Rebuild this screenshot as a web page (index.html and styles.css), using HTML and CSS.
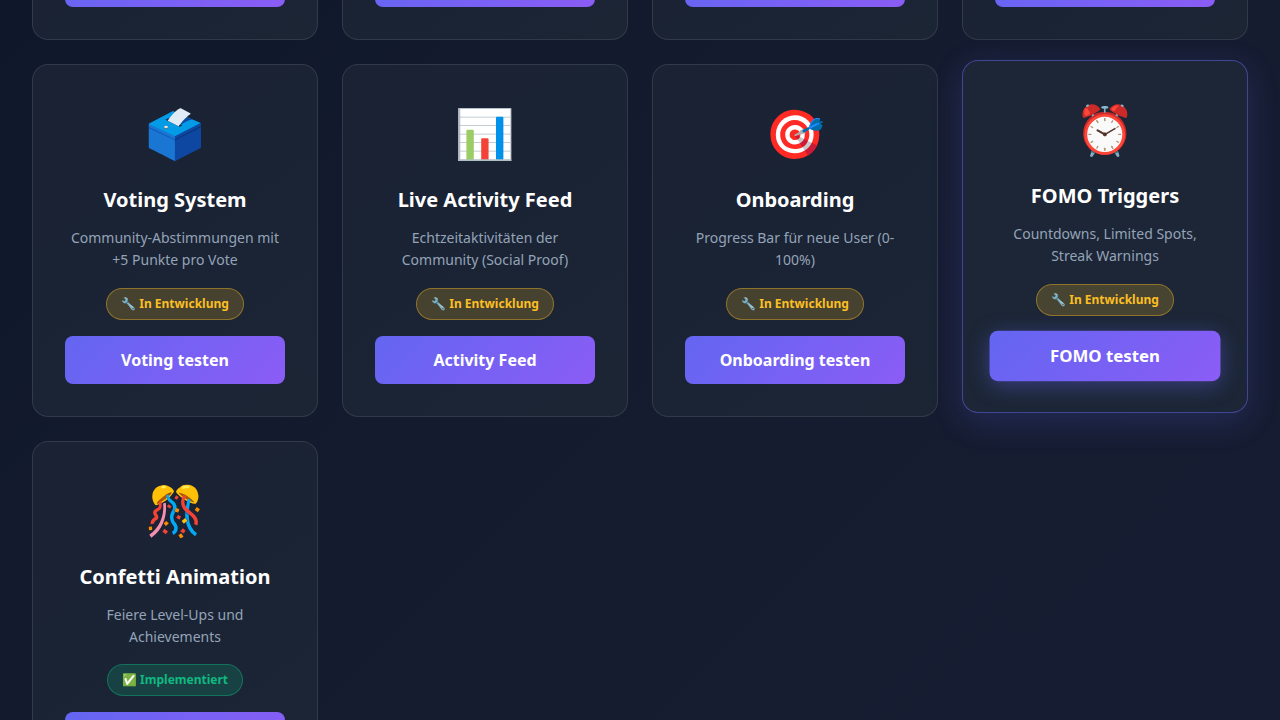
FILE: index.html
```html
<!DOCTYPE html>
<html lang="de">
<head>
    <meta charset="UTF-8">
    <meta name="viewport" content="width=device-width, initial-scale=1.0">
    <title>Features</title>
    <link rel="stylesheet" href="styles.css">
</head>
<body>
    <div class="feature-grid">
        <!-- previous row, only its bottom edge is in view -->
        <div class="card card-tail"><button class="test-btn">&nbsp;</button></div>
        <div class="card card-tail"><button class="test-btn">&nbsp;</button></div>
        <div class="card card-tail"><button class="test-btn">&nbsp;</button></div>
        <div class="card card-tail"><button class="test-btn">&nbsp;</button></div>

        <div class="card">
            <div class="card-icon">🗳️</div>
            <h3>Voting System</h3>
            <p>Community-Abstimmungen mit +5 Punkte pro Vote</p>
            <span class="badge badge-dev">🔧 In Entwicklung</span>
            <button class="test-btn">Voting testen</button>
        </div>
        <div class="card">
            <div class="card-icon">📊</div>
            <h3>Live Activity Feed</h3>
            <p>Echtzeitaktivitäten der Community (Social Proof)</p>
            <span class="badge badge-dev">🔧 In Entwicklung</span>
            <button class="test-btn">Activity Feed</button>
        </div>
        <div class="card">
            <div class="card-icon">🎯</div>
            <h3>Onboarding</h3>
            <p>Progress Bar für neue User (0-100%)</p>
            <span class="badge badge-dev">🔧 In Entwicklung</span>
            <button class="test-btn">Onboarding testen</button>
        </div>
        <div class="card card-active">
            <div class="card-icon">⏰</div>
            <h3>FOMO Triggers</h3>
            <p>Countdowns, Limited Spots, Streak Warnings</p>
            <span class="badge badge-dev">🔧 In Entwicklung</span>
            <button class="test-btn">FOMO testen</button>
        </div>
        <div class="card">
            <div class="card-icon">🎊</div>
            <h3>Confetti Animation</h3>
            <p>Feiere Level-Ups und Achievements</p>
            <span class="badge badge-done">✅ Implementiert</span>
            <button class="test-btn">Confetti testen</button>
        </div>
    </div>
</body>
</html>
```

FILE: styles.css
```css
* {
    box-sizing: border-box;
}
html, body {
    height: 720px;
    overflow: hidden;
}
body {
    margin: 0;
    font-family: "Noto Sans", sans-serif;
    background: linear-gradient(135deg, #0f172a 0%, #151c30 55%, #161d32 100%);
    color: #FFFFFF;
}
.feature-grid {
    display: grid;
    grid-template-columns: repeat(4, 1fr);
    gap: 24px;
    margin-top: -73.95px;
    padding: 0 32px;
}
.card {
    display: flex;
    flex-direction: column;
    align-items: center;
    padding: 32px;
    text-align: center;
    background: linear-gradient(145deg, #1a2234, #1b2534);
    border: 1px solid rgba(255, 255, 255, 0.1);
    border-radius: 16px;
}
.card-tail {
    justify-content: flex-end;
}
.card-active {
    transform: translateY(-4px);
    background: #1c2636;
    border-color: rgba(99, 102, 241, 0.5);
    box-shadow: 0 8px 32px rgba(99, 102, 241, 0.2);
}
.card-active .test-btn {
    transform: scale(1.05);
    box-shadow: 0 4px 20px rgba(99, 102, 241, 0.4);
}
.card-icon {
    font-size: 48px;
    line-height: 72px;
    margin-bottom: 15px;
}
.card h3 {
    margin: 0 0 11px;
    font-size: 20px;
    line-height: 32px;
    font-weight: 700;
}
.card p {
    margin: 0 0 15.7px;
    font-size: 14px;
    line-height: 22.4px;
    color: #94a3b8;
}
.badge {
    padding: 6px 14px;
    margin-bottom: 16px;
    font-size: 12px;
    line-height: 18px;
    font-weight: 700;
    border-radius: 20px;
    border: 1px solid;
}
.badge-dev {
    color: #fbbf24;
    background-color: rgba(251, 191, 36, 0.2);
    border-color: rgba(251, 191, 36, 0.4);
}
.badge-done {
    color: #10b981;
    background-color: rgba(16, 185, 129, 0.2);
    border-color: rgba(16, 185, 129, 0.4);
}
.test-btn {
    width: 100%;
    height: 48px;
    border: none;
    border-radius: 8px;
    font-family: inherit;
    font-size: 16px;
    font-weight: 700;
    color: #FFFFFF;
    background: linear-gradient(135deg, #6366f1, #8b5cf6);
    cursor: pointer;
}
```
